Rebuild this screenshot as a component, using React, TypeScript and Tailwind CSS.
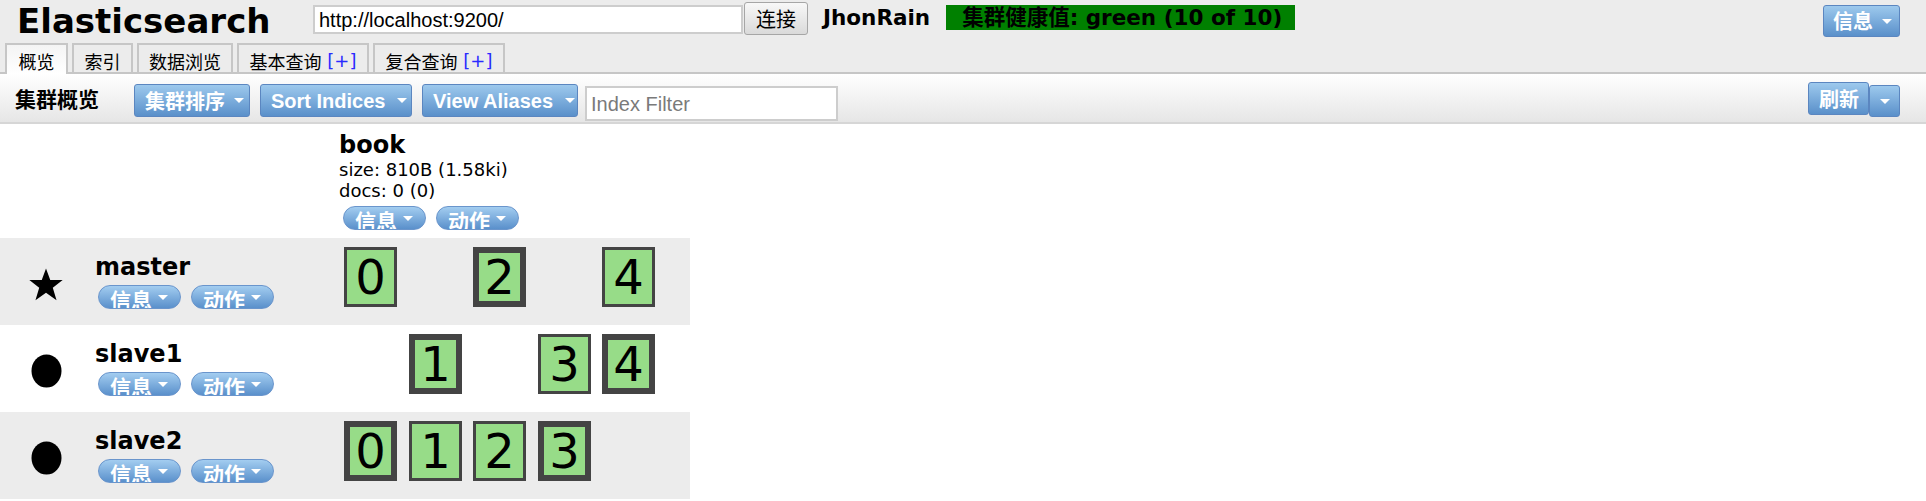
import React from "react";

const Caret = ({ cls = "" }: { cls?: string }) => (
  <span className={"inline-block w-0 h-0 border-x-[5px] border-x-transparent border-t-[5px] border-t-white " + cls} />
);

function Pill({ label }: { label: string }) {
  return (
    <div className="w-[83px] h-[24px] rounded-full border border-[#6a95cc] bg-linear-to-b from-[#a3cdf0] to-[#5a90cb] overflow-hidden flex items-start pl-[11px]">
      <span className="text-white font-bold text-[21px] leading-[20px] pt-[3px] font-[family-name:'Noto_Sans_CJK_SC',sans-serif] whitespace-nowrap">
        {label}
      </span>
      <Caret cls="mt-[9px] ml-[6px]" />
    </div>
  );
}

function Pills() {
  return (
    <div className="flex gap-[10px]">
      <Pill label="信息" />
      <Pill label="动作" />
    </div>
  );
}

type Shard = { n: number; col: number; primary: boolean };

const rows: { name: string; master: boolean; bg: string; shards: Shard[] }[] = [
  {
    name: "master",
    master: true,
    bg: "bg-[#ececec]",
    shards: [
      { n: 0, col: 0, primary: false },
      { n: 2, col: 2, primary: true },
      { n: 4, col: 4, primary: false },
    ],
  },
  {
    name: "slave1",
    master: false,
    bg: "bg-white",
    shards: [
      { n: 1, col: 1, primary: true },
      { n: 3, col: 3, primary: false },
      { n: 4, col: 4, primary: true },
    ],
  },
  {
    name: "slave2",
    master: false,
    bg: "bg-[#ececec]",
    shards: [
      { n: 0, col: 0, primary: true },
      { n: 1, col: 1, primary: false },
      { n: 2, col: 2, primary: false },
      { n: 3, col: 3, primary: true },
    ],
  },
];

function ShardBox({ s }: { s: Shard }) {
  return (
    <div
      className={
        "w-[53px] h-[60px] border-[#444444] bg-[#97dc88] flex items-center justify-center text-[48px] leading-none text-black " +
        (s.primary ? "border-[6px]" : "border-[3px]")
      }
    >
      {s.n}
    </div>
  );
}

function Star() {
  return (
    <svg width="34" height="33" viewBox="0 0 100 96">
      <polygon points="50,1 62.5,35 99,35 70,57.5 81,94 50,72.5 19,94 30,57.5 1,35 37.5,35" fill="#000" />
    </svg>
  );
}

function Dot() {
  return (
    <svg width="31" height="34" viewBox="0 0 31 34">
      <ellipse cx="15.5" cy="17" rx="15" ry="16.5" fill="#000" />
    </svg>
  );
}

function Tab({ w, active, children }: { w: string; active?: boolean; children: React.ReactNode }) {
  return (
    <div
      className={
        "border-2 border-b-0 border-[#c6c6c6] flex justify-center pt-[5px] text-[18px] leading-[22px] whitespace-nowrap " +
        w +
        (active ? " h-[31px] -mb-[2px] bg-linear-to-b from-[#f4f4f4] to-white relative z-10" : " h-[29px] bg-[#ececec]")
      }
    >
      {children}
    </div>
  );
}

export default function App() {
  return (
    <div className="w-[1926px] h-[501px] overflow-hidden bg-white text-black font-[family-name:'DejaVu_Sans','Noto_Sans_CJK_SC',sans-serif]">
      {/* header */}
      <div className="bg-[#ececec]">
        <div className="h-[43px] flex items-start">
          <div className="w-[313px] pl-[17px] text-[34px] font-bold leading-[40px] mt-[1px] whitespace-nowrap">Elasticsearch</div>
          <div className="w-[430px] h-[29px] mt-[5px] bg-white border-2 border-[#cdcdcd] pl-[4px] flex items-center text-[20px] font-[family-name:'Liberation_Sans',sans-serif]">
            http://localhost:9200/
          </div>
          <div className="ml-[1px] mt-[2px] w-[64px] h-[33px] border border-[#a6a6a6] rounded-[3px] bg-linear-to-b from-[#f8f8f8] to-[#dadada] flex items-center justify-center text-[20px] font-[family-name:'Noto_Sans_CJK_SC',sans-serif]">
            连接
          </div>
          <div className="ml-[15px] mt-[5px] text-[21.5px] font-bold leading-[25px] whitespace-nowrap">JhonRain</div>
          <div className="ml-[16px] mt-[5px] h-[25px] bg-[#008000] pl-[16px] pr-[13px] text-[21.5px] font-bold leading-[25px] whitespace-nowrap">
            集群健康值: green (10 of 10)
          </div>
          <div className="ml-auto mr-[26px] mt-[5px] w-[77px] h-[32px] rounded-[3px] border border-[#5b86c0] bg-linear-to-b from-[#9dc9ed] to-[#5a90ca] flex items-center pl-[9px]">
            <span className="text-white font-bold text-[20px] font-[family-name:'Noto_Sans_CJK_SC',sans-serif]">信息</span>
            <Caret cls="ml-[9px]" />
          </div>
        </div>
        <div className="h-[31px] flex items-end border-b-2 border-[#c6c6c6] pl-[5px] gap-[4px] font-[family-name:'Noto_Sans_CJK_SC',sans-serif]">
          <Tab w="w-[63px]" active>概览</Tab>
          <Tab w="w-[61px]">索引</Tab>
          <Tab w="w-[96px]">数据浏览</Tab>
          <Tab w="w-[132px]">
            基本查询<span className="text-[#2a2aff] font-[family-name:'DejaVu_Sans',sans-serif]">&nbsp;[+]</span>
          </Tab>
          <Tab w="w-[132px]">
            复合查询<span className="text-[#2a2aff] font-[family-name:'DejaVu_Sans',sans-serif]">&nbsp;[+]</span>
          </Tab>
        </div>
      </div>

      {/* toolbar */}
      <div className="h-[50px] border-b-2 border-[#d6d6d6] bg-linear-to-b from-white to-[#e6e6e6] flex items-start">
        <div className="ml-[15px] mt-[12px] w-[119px] text-[21px] leading-[24px] font-bold font-[family-name:'Noto_Sans_CJK_SC',sans-serif]">集群概览</div>
        <div className="mt-[10px] w-[116px] h-[33px] rounded-[3px] border border-[#5b86c0] bg-linear-to-b from-[#9dc9ed] to-[#5a90ca] flex items-center pl-[10px]">
          <span className="text-white font-bold text-[20px] font-[family-name:'Noto_Sans_CJK_SC',sans-serif]">集群排序</span>
          <Caret cls="ml-[9px]" />
        </div>
        <div className="ml-[10px] mt-[10px] w-[152px] h-[33px] rounded-[3px] border border-[#5b86c0] bg-linear-to-b from-[#9dc9ed] to-[#5a90ca] flex items-center pl-[10px]">
          <span className="text-white font-bold text-[20px] font-[family-name:'Liberation_Sans',sans-serif]">Sort Indices</span>
          <Caret cls="ml-[12px]" />
        </div>
        <div className="ml-[10px] mt-[10px] w-[156px] h-[33px] rounded-[3px] border border-[#5b86c0] bg-linear-to-b from-[#9dc9ed] to-[#5a90ca] flex items-center pl-[10px]">
          <span className="text-white font-bold text-[20px] font-[family-name:'Liberation_Sans',sans-serif]">View Aliases</span>
          <Caret cls="ml-[12px]" />
        </div>
        <div className="ml-[7px] mt-[12px] w-[253px] h-[35px] bg-white border-2 border-[#cdcdcd] pl-[4px] flex items-center text-[20px] text-[#7a7a7a] font-[family-name:'Liberation_Sans',sans-serif]">
          Index Filter
        </div>
        <div className="ml-auto mt-[8px] w-[61px] h-[33px] rounded-[3px] border border-[#5b86c0] bg-linear-to-b from-[#9dc9ed] to-[#5a90ca] flex items-center pl-[10px]">
          <span className="text-white font-bold text-[20px] font-[family-name:'Noto_Sans_CJK_SC',sans-serif]">刷新</span>
        </div>
        <div className="mr-[26px] mt-[11px] w-[31px] h-[32px] rounded-[3px] border border-[#5b86c0] bg-linear-to-b from-[#9dc9ed] to-[#5a90ca] flex items-center justify-center">
          <Caret />
        </div>
      </div>

      {/* index header */}
      <div className="h-[114px] flex">
        <div className="w-[339px]" />
        <div className="pt-[7px]">
          <div className="text-[24px] leading-[28px] font-bold">book</div>
          <div className="text-[18px] leading-[21px]">size: 810B (1.58ki)</div>
          <div className="text-[18px] leading-[21px]">docs: 0 (0)</div>
          <div className="mt-[5px] ml-[4px]">
            <Pills />
          </div>
        </div>
      </div>

      {/* node rows */}
      <div className="w-[690px]">
        {rows.map((r) => (
          <div key={r.name} className={"h-[87px] flex " + r.bg}>
            <div className="w-[92px] flex items-center justify-center pt-[5px]">{r.master ? <Star /> : <Dot />}</div>
            <div className="w-[252px] pl-[3px] pt-[15px]">
              <div className="text-[24px] leading-[28px] font-bold">{r.name}</div>
              <div className="mt-[4px] ml-[3px]">
                <Pills />
              </div>
            </div>
            <div className="pt-[9px] grid grid-cols-[65px_64px_65px_64px_64px] h-fit">
              {[0, 1, 2, 3, 4].map((c) => {
                const s = r.shards.find((x) => x.col === c);
                return <div key={c}>{s ? <ShardBox s={s} /> : null}</div>;
              })}
            </div>
          </div>
        ))}
      </div>
    </div>
  );
}
